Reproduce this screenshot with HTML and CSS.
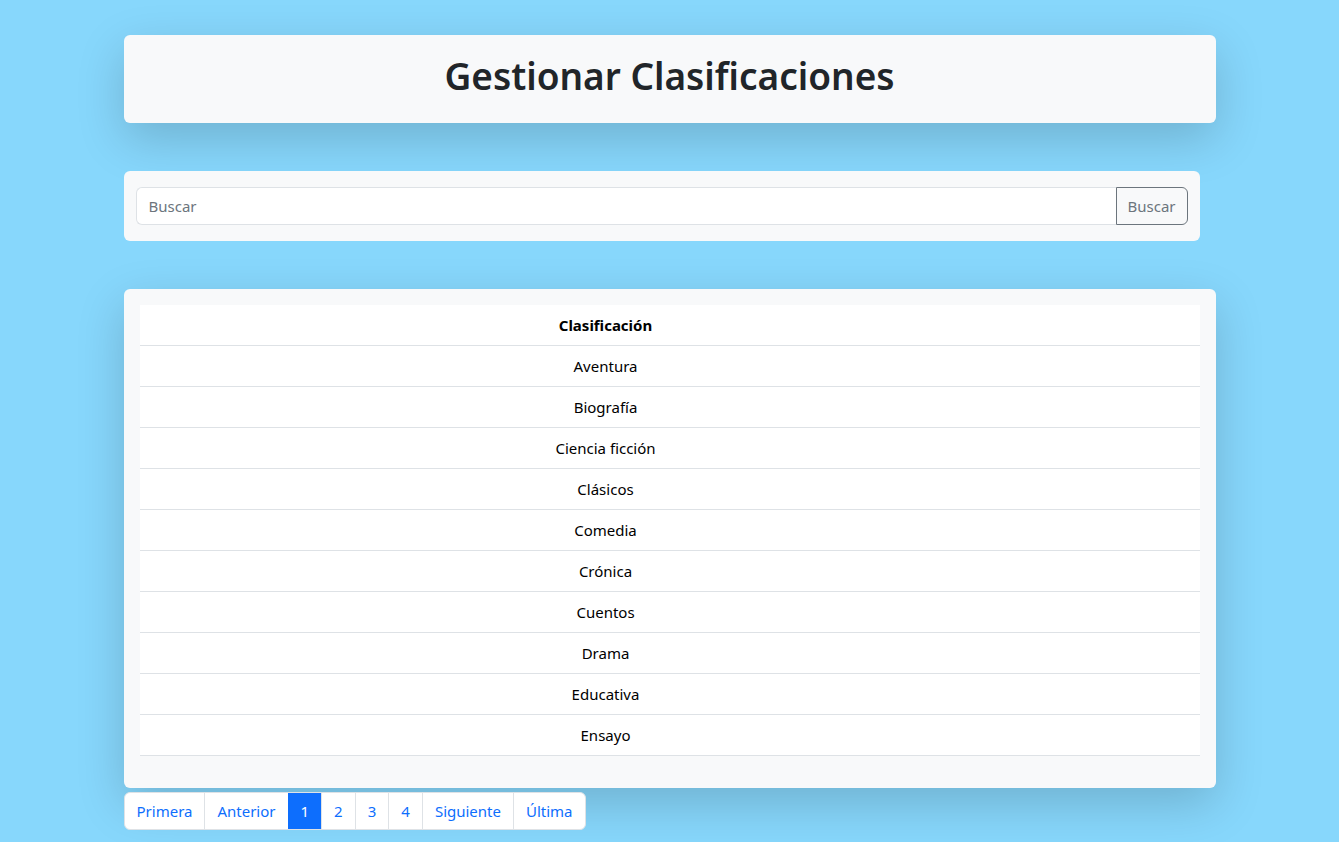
FILE: index.html
```html
<!DOCTYPE html>
<html lang="es">
<head>
<meta charset="utf-8">
<title>Gestionar Clasificaciones</title>
<link rel="stylesheet" href="styles.css">
</head>
<body>
<main class="page">
  <header class="title-card">
    <h1>Gestionar Clasificaciones</h1>
  </header>

  <form class="search-card">
    <input class="search-input" type="text" placeholder="Buscar">
    <button class="search-btn" type="button">Buscar</button>
  </form>

  <section class="table-card">
    <table class="grid">
      <thead>
        <tr><th>Clasificación</th><th class="actions"></th></tr>
      </thead>
      <tbody>
        <tr><td>Aventura</td><td class="actions"></td></tr>
        <tr><td>Biografía</td><td class="actions"></td></tr>
        <tr><td>Ciencia ficción</td><td class="actions"></td></tr>
        <tr><td>Clásicos</td><td class="actions"></td></tr>
        <tr><td>Comedia</td><td class="actions"></td></tr>
        <tr><td>Crónica</td><td class="actions"></td></tr>
        <tr><td>Cuentos</td><td class="actions"></td></tr>
        <tr><td>Drama</td><td class="actions"></td></tr>
        <tr><td>Educativa</td><td class="actions"></td></tr>
        <tr><td>Ensayo</td><td class="actions"></td></tr>
      </tbody>
    </table>
  </section>

  <nav class="pager">
    <a class="pg">Primera</a>
    <a class="pg">Anterior</a>
    <a class="pg active">1</a>
    <a class="pg">2</a>
    <a class="pg">3</a>
    <a class="pg">4</a>
    <a class="pg">Siguiente</a>
    <a class="pg">Última</a>
  </nav>
</main>
</body>
</html>
```

FILE: styles.css
```css
* { box-sizing: border-box; }

html, body {
  margin: 0;
  padding: 0;
}

body {
  background: #87d7fc;
  font-family: "Noto Sans", "Open Sans", sans-serif;
  font-size: 16px;
  line-height: 1.5;
  color: #212529;
  min-height: 842px;
}

.page {
  width: 1092px;
  margin: 0 auto;
  padding-top: 35px;
  display: flex;
  flex-direction: column;
  align-items: flex-start;
}

.title-card {
  width: 100%;
  background: #f8f9fa;
  border-radius: 6px;
  padding: 17px 0 23px;
  box-shadow: 0 16px 48px rgba(0, 0, 0, 0.175);
  text-align: center;
}

.title-card h1 {
  margin: 0;
  font-size: 37px;
  font-weight: 600;
  line-height: 48px;
  color: #212529;
}

.search-card {
  margin-top: 48px;
  width: 1076px;
  background: #f8f9fa;
  border-radius: 6px;
  padding: 16px 12px;
  display: flex;
}

.search-input {
  flex: 1;
  height: 38px;
  border: 1px solid #dee2e6;
  border-right: none;
  border-radius: 6px 0 0 6px;
  background: #fff;
  padding: 6px 12px;
  font: inherit;
  font-size: 15px;
  color: #212529;
  outline: none;
}

.search-input::placeholder { color: #6c757d; }

.search-btn {
  width: 72px;
  height: 38px;
  border: 1px solid #6c757d;
  border-radius: 0 6px 6px 0;
  background: transparent;
  color: #6c757d;
  font: inherit;
  font-size: 15px;
  padding: 0;
}

.table-card {
  margin-top: 48px;
  width: 100%;
  background: #f8f9fa;
  border-radius: 6px;
  padding: 16px 16px 32px;
  box-shadow: 0 16px 48px rgba(0, 0, 0, 0.175);
}

.grid {
  width: 100%;
  border-collapse: collapse;
  background: #fff;
  font-size: 15px;
}

.grid th, .grid td {
  padding: 8px;
  text-align: center;
  border-bottom: 1px solid #dee2e6;
  color: #000;
  line-height: 24px;
}

.grid th { font-weight: 700; }

.grid .actions { width: 128px; }

.pager {
  margin-top: 4px;
  display: flex;
  background: #fff;
  border: 1px solid #dee2e6;
  border-radius: 6px;
  overflow: hidden;
}

.pg {
  padding: 6px 12px;
  height: 36px;
  line-height: 24px;
  color: #0d6efd;
  font-size: 15px;
  border-left: 1px solid #dee2e6;
  text-decoration: none;
  cursor: pointer;
}

.pg:first-child { border-left: none; }

.pg.active {
  background: #0d6efd;
  color: #fff;
  border-left-color: #0d6efd;
}
```
